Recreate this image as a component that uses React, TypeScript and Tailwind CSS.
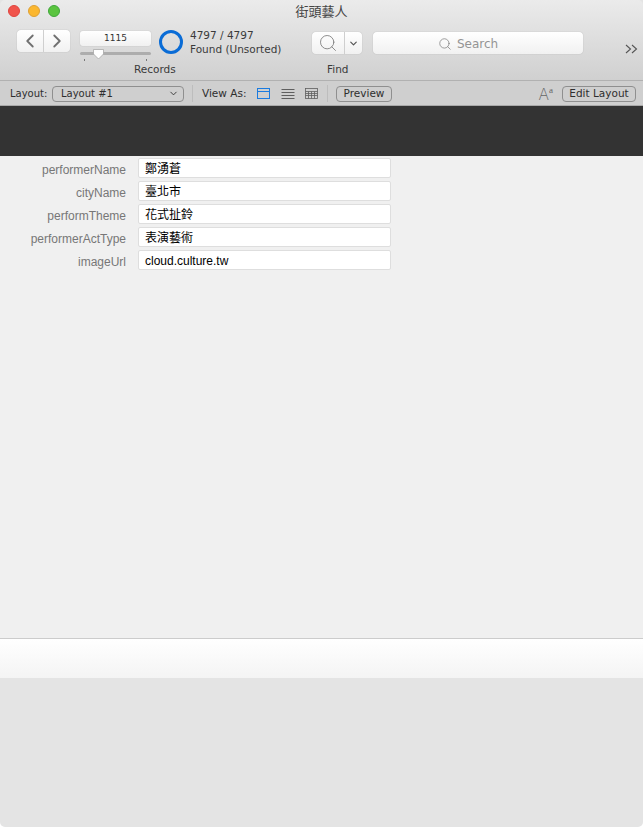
import { ChevronDown, ChevronLeft, ChevronRight, Search } from "lucide-react";

const UI_FONT = "font-['DejaVu_Sans','Noto_Sans',sans-serif]";

const FIELDS = [
    { label: "performerName", value: "鄭湧蒼" },
    { label: "cityName", value: "臺北市" },
    { label: "performTheme", value: "花式扯鈴" },
    { label: "performerActType", value: "表演藝術" },
    { label: "imageUrl", value: "cloud.culture.tw" },
];

function TrafficLights() {
    return (
        <div className="flex gap-2">
            <span className="size-3 rounded-full border border-[#e0443e] bg-[#f0544c]" />
            <span className="size-3 rounded-full border border-[#dea034] bg-[#fbb72f]" />
            <span className="size-3 rounded-full border border-[#3fa73a] bg-[#5ac43f]" />
        </div>
    );
}

function RecordSlider() {
    return (
        <div className="flex w-[71px] flex-col pt-[1px]">
            <div className="flex h-[15px] items-center justify-center rounded-[3px] bg-gradient-to-b from-white to-[#f1f1f1] text-[9px] text-[#333] shadow-[0_0_1px_#999]">
                1115
            </div>
            <div className="relative mt-[6px] h-[3px] w-[71px] rounded-full bg-[#adadad]">
                <svg className="absolute top-[-4px] left-[12px]" width="13" height="12" viewBox="0 0 13 12">
                    <path d="M1.5 1.5h10v4.5l-5 5-5-5z" fill="#fff" stroke="#a0a0a0" strokeWidth="0.7" strokeLinejoin="round" />
                </svg>
            </div>
            <div className="mt-[4px] flex justify-between px-[4px]">
                <span className="h-[2px] w-px bg-[#777]" />
                <span className="h-[2px] w-px bg-[#777]" />
            </div>
        </div>
    );
}

function Toolbar() {
    return (
        <div className="h-[81px] rounded-t-[5px] border-b border-[#b1b1b1] bg-gradient-to-b from-[#ebebeb] to-[#d0d0d0]">
            <div className="relative flex h-[22px] items-center pl-2">
                <TrafficLights />
                <span className="absolute inset-x-0 top-[2px] text-center font-['Noto_Sans_CJK_TC',sans-serif] text-[13px] leading-[17px] text-[#444]">
                    街頭藝人
                </span>
            </div>

            <div className={`flex items-start pt-[8px] pl-[17px] ${UI_FONT}`}>
                <div className="flex h-[22px] w-[53px] shrink-0 rounded-[4px] bg-gradient-to-b from-white to-[#f1f1f1] shadow-[0_0_1px_#999]">
                    <div className="flex w-[27px] items-center justify-center border-r border-[#cfcfcf]">
                        <ChevronLeft className="size-[22px] text-[#707070]" strokeWidth={2} />
                    </div>
                    <div className="flex flex-1 items-center justify-center">
                        <ChevronRight className="size-[22px] text-[#707070]" strokeWidth={2} />
                    </div>
                </div>

                <div className="ml-[10px] shrink-0">
                    <RecordSlider />
                </div>

                <span className="ml-[8px] size-[24px] shrink-0 rounded-full border-[3px] border-[#0a6cd6]" />

                <div className="mt-[-2px] ml-[7px] w-[92px] shrink-0 text-[10.5px] leading-[14px] text-[#3a3a3a]">
                    <div>4797 / 4797</div>
                    <div className="whitespace-nowrap">Found (Unsorted)</div>
                </div>

                <div className="mt-[2px] ml-[30px] flex h-[22px] w-[50px] shrink-0 rounded-[4px] bg-gradient-to-b from-white to-[#f1f1f1] shadow-[0_0_1px_#999]">
                    <div className="flex w-[33px] items-center justify-center border-r border-[#cfcfcf]">
                        <Search className="size-[20px] text-[#777]" strokeWidth={1} />
                    </div>
                    <div className="flex flex-1 items-center justify-center">
                        <ChevronDown className="size-[11px] text-[#555]" strokeWidth={2.6} />
                    </div>
                </div>

                <div className="mt-[2px] ml-[11px] flex h-[22px] w-[210px] shrink-0 items-center justify-center gap-[5px] rounded-[4px] bg-gradient-to-b from-white to-[#f1f1f1] pt-[1px] pr-[20px] text-[12px] text-[#949494] shadow-[0_0_1px_#999]">
                    <Search className="size-[14px] text-[#808080]" strokeWidth={1.3} />
                    Search
                </div>

                <svg className="mt-[14px] ml-[42px] shrink-0" width="13" height="10" viewBox="0 0 13 10" fill="none" stroke="#555" strokeWidth="1.1">
                    <path d="M1 1l4.5 4L1 9M7 1l4.5 4L7 9" />
                </svg>
            </div>

            <div className={`relative mt-[1px] h-[14px] text-[10.5px] leading-[14px] text-[#3a3a3a] ${UI_FONT}`}>
                <span className="absolute left-[134px]">Records</span>
                <span className="absolute left-[327px]">Find</span>
            </div>
        </div>
    );
}

function LayoutBar() {
    return (
        <div className={`flex h-[25px] items-center border-b border-[#a9a9a9] bg-[#cfcfcf] pt-px pl-[10px] text-[10.5px] text-[#2e2e2e] ${UI_FONT}`}>
            <span className="w-[37px] text-[10px] whitespace-nowrap">Layout:</span>
            <div className="ml-[5px] flex h-[16px] w-[132px] items-center justify-between rounded-[4px] border border-[#8f8f8f] pr-[4px] pl-[8px] text-[10px]">
                Layout #1
                <ChevronDown className="size-[11px] text-[#333]" strokeWidth={2} />
            </div>
            <span className="ml-[8px] h-[17px] w-px bg-[#bdbdbd]" />
            <span className="ml-[9px] w-[45px] whitespace-nowrap">View As:</span>

            <svg className="ml-[10px] shrink-0" width="14" height="11" viewBox="0 0 14 11" fill="none" stroke="#1a7be0">
                <rect x="0.5" y="0.5" width="12" height="10" />
                <path d="M0.5 3.5h12" />
            </svg>
            <svg className="ml-[10px] shrink-0" width="14" height="10" viewBox="0 0 14 10" fill="none" stroke="#5f5f5f">
                <path d="M0.5 0.5h13M0.5 3.5h13M0.5 6.5h13M0.5 9.5h13" />
            </svg>
            <svg className="ml-[10px] shrink-0" width="13" height="11" viewBox="0 0 13 11" fill="none" stroke="#5f5f5f" strokeWidth="0.8">
                <rect x="0.5" y="0.5" width="12" height="10" />
                <path d="M0.5 3.5h12M0.5 5.5h12M0.5 7.5h12M3.5 3.5v7M6.5 3.5v7M9.5 3.5v7" />
            </svg>

            <span className="ml-[9px] h-[17px] w-px bg-[#bdbdbd]" />
            <div className="ml-[8px] flex h-[16px] w-[56px] items-center justify-center rounded-[4px] border border-[#8f8f8f]">Preview</div>

            <div className="ml-auto flex items-center pr-[7px]">
                <span className="flex items-start font-['Inter',sans-serif] text-[16px] leading-none font-extralight text-[#666]">
                    A<span className="font-['Liberation_Serif',serif] text-[9px] leading-[9px] font-normal">a</span>
                </span>
                <div className="ml-[9px] flex h-[16px] w-[74px] items-center justify-center rounded-[4px] border border-[#8f8f8f]">Edit Layout</div>
            </div>
        </div>
    );
}

function RecordForm() {
    return (
        <div className="flex h-[482px] flex-col gap-[3px] bg-[#f0f0f0] pt-[2px]">
            {FIELDS.map((field) => (
                <div key={field.label} className="flex h-[20px] items-center font-['Liberation_Sans','Noto_Sans_CJK_TC',sans-serif] text-[12px]">
                    <span className="w-[126px] pt-[3px] text-right text-[#777]">{field.label}</span>
                    <div className="ml-[12px] flex h-[20px] w-[253px] items-center rounded-[2px] border border-[#dedede] bg-white pt-[1px] pl-[6px] text-black">
                        {field.value}
                    </div>
                </div>
            ))}
        </div>
    );
}

export default function App() {
    return (
        <div className="flex h-[827px] w-[643px] flex-col overflow-hidden rounded-b-[5px] bg-[#e4e4e4]">
            <Toolbar />
            <LayoutBar />
            <div className="h-[50px] bg-[#333333]" />
            <RecordForm />
            <div className="h-[40px] border-t border-[#cccccc] bg-gradient-to-b from-white to-[#f4f4f4]" />
        </div>
    );
}
